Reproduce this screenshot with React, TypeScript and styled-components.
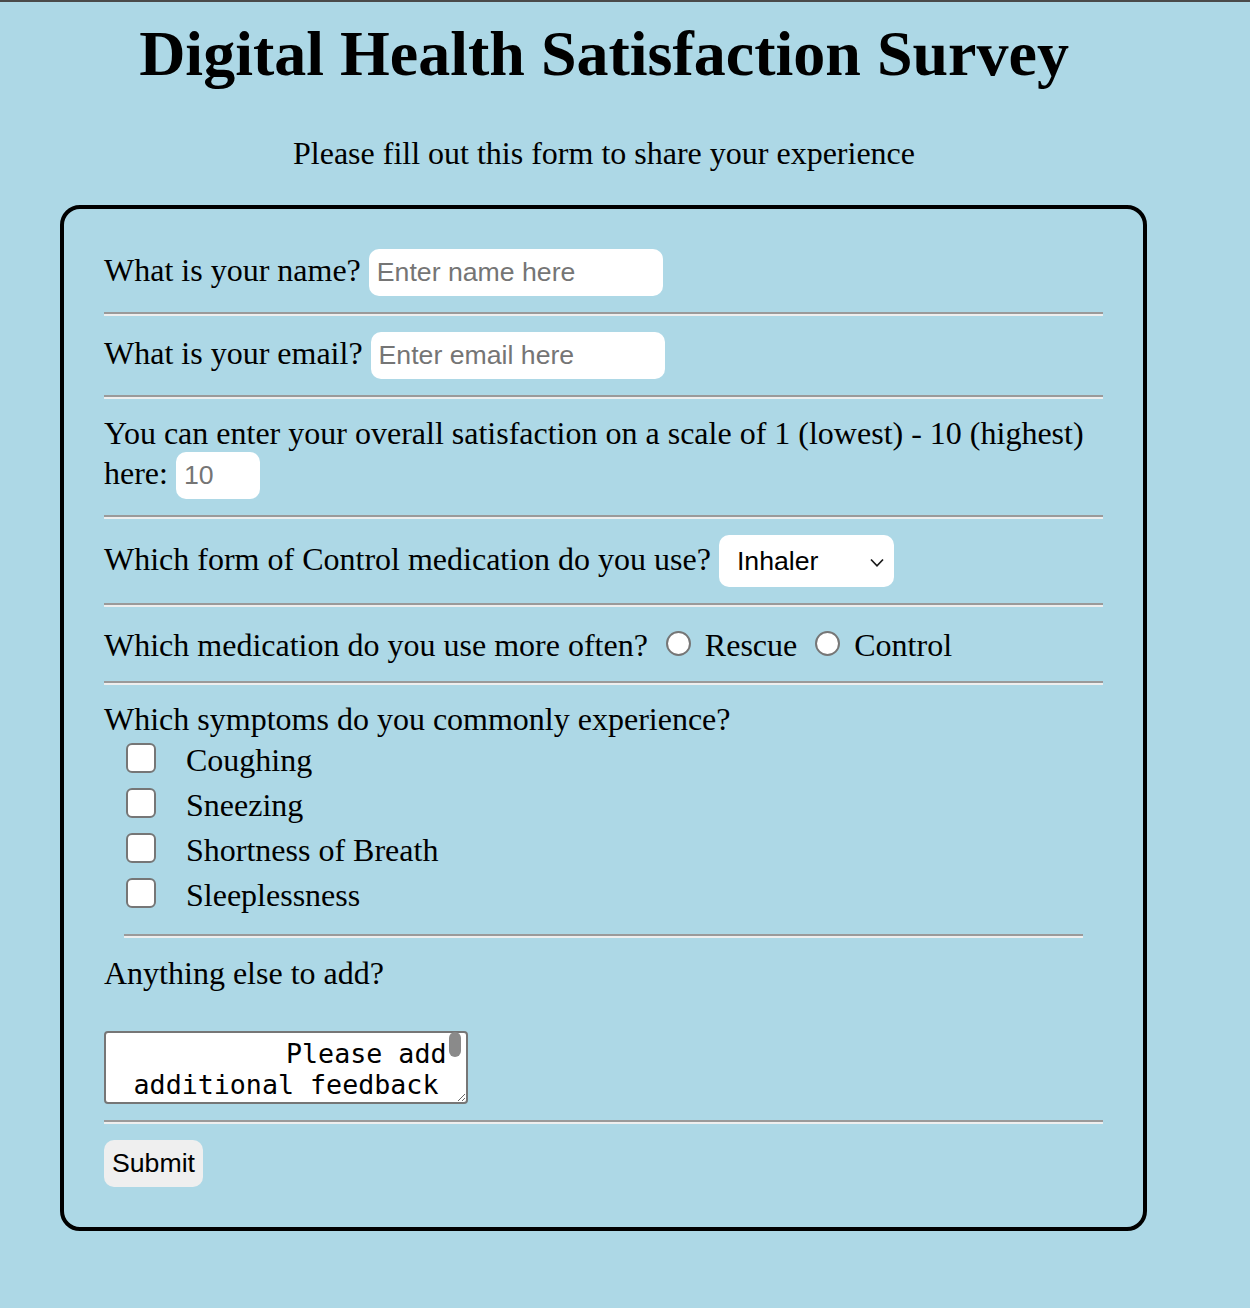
import React from "react"
import styled, { createGlobalStyle } from "styled-components"

const GlobalStyle = createGlobalStyle`
  html, body {
    margin: 0;
    padding: 0;
    background: #add8e6;
  }

  body {
    font-family: "Liberation Serif", "Times New Roman", serif;
    font-size: 32px;
    color: #000;
  }
`

const TopEdge = styled.div`
  height: 2px;
  background: #4a4a4a;
`

const Page = styled.main`
  width: 1208px;
  padding-bottom: 76px;
`

const Title = styled.h1`
  margin: 15px 0 44px;
  font-size: 64px;
  font-weight: 700;
  line-height: normal;
  text-align: center;
`

const Subtitle = styled.p`
  margin: 0 0 33px;
  text-align: center;
`

const SurveyForm = styled.form`
  margin: 0 61px 0 60px;
  padding: 40px;
  border: 4px solid #000;
  border-radius: 20px;
`

const Field = styled.div<{ $extra?: number }>`
  padding: ${(p) => p.$extra ?? 0}px 0 ${(p) => p.$extra ?? 0}px;
  line-height: normal;
`

const Divider = styled.hr<{ $inset?: boolean }>`
  height: 0;
  margin: 16px ${(p) => (p.$inset ? "20px" : "0")};
  border: 0;
  border-top: 2px solid #9a9a9a;
  border-bottom: 2px solid #eeeeee;
`

const TextInput = styled.input<{ $width: number }>`
  box-sizing: border-box;
  width: ${(p) => p.$width}px;
  padding: 8px;
  border: none;
  border-radius: 10px;
  background: #fff;
  font-family: "Liberation Sans", Arial, sans-serif;
  font-size: 26.67px;
  line-height: normal;
  color: #000;
  vertical-align: baseline;
  outline: none;

  &::placeholder {
    color: #757575;
  }

  &::-webkit-inner-spin-button,
  &::-webkit-outer-spin-button {
    -webkit-appearance: none;
    margin: 0;
  }
`

const SelectWrap = styled.span`
  position: relative;
  display: inline-block;
  vertical-align: baseline;
`

const Select = styled.select`
  box-sizing: border-box;
  width: 175px;
  padding: 11px 40px 11px 18px;
  border: none;
  border-radius: 10px;
  background: #fff;
  font-family: "Liberation Sans", Arial, sans-serif;
  font-size: 26.67px;
  line-height: normal;
  color: #000;
  appearance: none;
  outline: none;
`

const Chevron = styled.svg`
  position: absolute;
  top: 23px;
  right: 10px;
  pointer-events: none;
`

const Radio = styled.input`
  box-sizing: border-box;
  width: 25px;
  height: 25px;
  margin: 6px 6px 0 10px;
  border: 2px solid #767676;
  border-radius: 50%;
  background: #fff;
  appearance: none;
  vertical-align: baseline;
`

const SymptomList = styled.div`
  margin: 0 20px;
`

const SymptomItem = styled.label`
  display: flex;
  align-items: center;
  height: 45px;
`

const Checkbox = styled.input`
  box-sizing: border-box;
  width: 30px;
  height: 30px;
  margin: -5px 30px 0 2px;
  border: 2px solid #767676;
  border-radius: 6px;
  background: #fff;
  appearance: none;
`

const FeedbackWrap = styled.div`
  position: relative;
  width: 364px;
  margin: 38px 0 5px;

  &::after {
    content: "";
    position: absolute;
    top: 1px;
    right: 7px;
    width: 12px;
    height: 25px;
    border-radius: 6px;
    background: #8a8a8a;
  }
`

const Feedback = styled.textarea`
  box-sizing: border-box;
  display: block;
  width: 364px;
  height: 73px;
  margin: 0;
  padding: 5px 4px 3px;
  border: 2px solid #767676;
  border-radius: 4px;
  background: #fff;
  font-family: "DejaVu Sans Mono", "Liberation Mono", monospace;
  font-size: 26.67px;
  line-height: normal;
  color: #000;
  text-align: center;
  overflow: hidden;
  outline: none;
`

const SubmitButton = styled.button`
  padding: 8px;
  border: none;
  border-radius: 10px;
  background: #efefef;
  font-family: "Liberation Sans", Arial, sans-serif;
  font-size: 26.67px;
  line-height: normal;
  color: #000;
`

const symptoms = ["Coughing", "Sneezing", "Shortness of Breath", "Sleeplessness"]

const App = () => {
  return (
    <>
      <GlobalStyle />
      <TopEdge />
      <Page>
        <Title>Digital Health Satisfaction Survey</Title>
        <Subtitle>Please fill out this form to share your experience</Subtitle>
        <SurveyForm onSubmit={(e) => e.preventDefault()}>
          <Field>
            <label htmlFor="name">What is your name?</label>{" "}
            <TextInput id="name" type="text" placeholder="Enter name here" $width={294} />
          </Field>
          <Divider />
          <Field>
            <label htmlFor="email">What is your email?</label>{" "}
            <TextInput id="email" type="email" placeholder="Enter email here" $width={294} />
          </Field>
          <Divider />
          <Field>
            <label htmlFor="rating">
              You can enter your overall satisfaction on a scale of 1 (lowest) - 10 (highest) here:
            </label>{" "}
            <TextInput id="rating" type="number" min={1} max={10} placeholder="10" $width={84} />
          </Field>
          <Divider />
          <Field>
            <label htmlFor="form">Which form of Control medication do you use?</label>{" "}
            <SelectWrap>
              <Select id="form" defaultValue="inhaler">
                <option value="inhaler">Inhaler</option>
                <option value="pill">Pill</option>
                <option value="injection">Injection</option>
              </Select>
              <Chevron width="14" height="10" viewBox="0 0 14 10">
                <path d="M1 1.5 L7 7.8 L13 1.5" fill="none" stroke="#1a1a1a" strokeWidth="1.7" />
              </Chevron>
            </SelectWrap>
          </Field>
          <Divider />
          <Field $extra={1.5}>
            Which medication do you use more often?{" "}
            <Radio type="radio" name="often" id="rescue" />{" "}
            <label htmlFor="rescue">Rescue</label>{" "}
            <Radio type="radio" name="often" id="control" />{" "}
            <label htmlFor="control">Control</label>
          </Field>
          <Divider />
          <Field>Which symptoms do you commonly experience?</Field>
          <SymptomList>
            {symptoms.map((s) => (
              <SymptomItem key={s}>
                <Checkbox type="checkbox" value={s} />
                {s}
              </SymptomItem>
            ))}
          </SymptomList>
          <Divider $inset />
          <Field $extra={1}>
            <label htmlFor="feedback">Anything else to add?</label>
          </Field>
          <FeedbackWrap>
            <Feedback
              id="feedback"
              rows={2}
              defaultValue={"          Please add additional feedback"}
            />
          </FeedbackWrap>
          <Divider />
          <SubmitButton type="submit">Submit</SubmitButton>
        </SurveyForm>
      </Page>
    </>
  )
}

export default App
